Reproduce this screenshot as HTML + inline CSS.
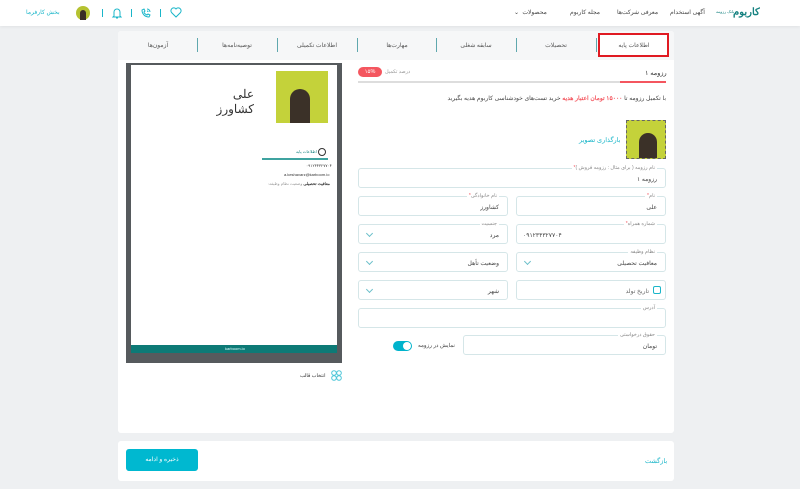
<!DOCTYPE html>
<html><head><meta charset="utf-8">
<style>
*{margin:0;padding:0;box-sizing:border-box}
body{width:800px;height:489px;background:#eef0f2;font-family:"Liberation Sans","Noto Sans CJK SC",sans-serif;position:relative;overflow:hidden;color:#333}
.a{position:absolute}
.t{font-size:6px;white-space:nowrap;direction:rtl}
.hdr{left:0;top:0;width:800px;height:26px;background:#fff;box-shadow:0 1px 3px rgba(0,0,0,.06)}
.card{background:#fff;border-radius:3px}
.fld{border:1px solid #d5e6e8;border-radius:3px;background:#fff}
.lbl{position:absolute;top:-4px;right:8px;background:#fff;padding:0 2px;font-size:5px;color:#888;direction:rtl;white-space:nowrap}
.val{position:absolute;right:8px;top:7px;font-size:6px;color:#444;direction:rtl;white-space:nowrap}
.chev{position:absolute;left:8px;top:6px;width:5px;height:5px;border-right:1px solid #6bbfca;border-bottom:1px solid #6bbfca;transform:rotate(45deg)}
.sep{width:1px;height:14px;background:#5fa8ae;top:38px}
.tab{top:42px;font-size:6px;color:#555;text-align:center;width:80px;direction:rtl}
.req{color:#f4565f}
</style></head><body>
<div class="a hdr"></div>
<div class="a" style="left:733px;top:7px;font-size:10px;font-weight:bold;color:#13807f">کاربوم</div>
<div class="a t" style="left:716px;top:9px;font-size:4px;color:#13807f">بانک رزومه</div>
<div class="a t" style="left:670px;top:9px;color:#444">آگهی استخدام</div>
<div class="a t" style="left:617px;top:9px;color:#444">معرفی شرکت‌ها</div>
<div class="a t" style="left:570px;top:9px;color:#444">مجله کاربوم</div>
<div class="a t" style="left:514px;top:9px;color:#444">محصولات &nbsp;⌄</div>
<div class="a t" style="left:26px;top:9px;color:#1ab6c9">بخش کارفرما</div>
<div class="a" style="left:76px;top:6px;width:14px;height:14px;border-radius:50%;background:#b5c230"><div style="margin:4px 0 0 4px;width:6px;height:10px;border-radius:3px 3px 0 0;background:#3a2e25"></div></div>
<div class="a" style="left:102px;top:9px;width:1px;height:8px;background:#1ab6c9"></div>
<svg class="a" style="left:112px;top:7px" width="10" height="12" viewBox="0 0 10 12"><path d="M2 9V5a3 3 0 0 1 6 0v4l1 1H1z M4 11h2" fill="none" stroke="#1ab6c9" stroke-width="1"/></svg>
<div class="a" style="left:131px;top:9px;width:1px;height:8px;background:#1ab6c9"></div>
<svg class="a" style="left:140px;top:7px" width="12" height="12" viewBox="0 0 12 12"><path d="M2 3c0 4 3 7 7 7l1-2-2-1-1 1C5 7 4 6 4 5l1-1-1-2z M7 2a3 3 0 0 1 3 3 M7 4a1 1 0 0 1 1 1" fill="none" stroke="#1ab6c9" stroke-width="1"/></svg>
<div class="a" style="left:160px;top:9px;width:1px;height:8px;background:#1ab6c9"></div>
<svg class="a" style="left:170px;top:7px" width="12" height="11" viewBox="0 0 12 11"><path d="M6 10L1.5 5.5A2.6 2.6 0 0 1 6 2a2.6 2.6 0 0 1 4.5 3.5z" fill="none" stroke="#1ab6c9" stroke-width="1"/></svg>

<div class="a card" style="left:118px;top:31px;width:556px;height:402px"></div>
<div class="a" style="left:118px;top:31px;width:556px;height:29px;background:#f6f7f8;border-radius:3px 3px 0 0"></div>
<div class="a" style="left:598px;top:33px;width:71px;height:24px;background:#fff;border:2px solid #e01a22"></div>
<div class="a tab" style="left:594px">اطلاعات پایه</div>
<div class="a sep" style="left:596px"></div>
<div class="a tab" style="left:516px">تحصیلات</div>
<div class="a sep" style="left:516px"></div>
<div class="a tab" style="left:436px">سابقه شغلی</div>
<div class="a sep" style="left:436px"></div>
<div class="a tab" style="left:357px">مهارت‌ها</div>
<div class="a sep" style="left:357px"></div>
<div class="a tab" style="left:277px">اطلاعات تکمیلی</div>
<div class="a sep" style="left:277px"></div>
<div class="a tab" style="left:197px">توصیه‌نامه‌ها</div>
<div class="a sep" style="left:197px"></div>
<div class="a tab" style="left:118px">آزمون‌ها</div>

<!-- preview -->
<div class="a" style="left:126px;top:63px;width:216px;height:300px;background:#565a5d"></div>
<div class="a" style="left:131px;top:65px;width:206px;height:281px;background:#fff"></div>
<div class="a" style="left:131px;top:345px;width:206px;height:8px;background:#0d7a76"></div>
<div class="a" style="left:225px;top:346px;font-size:4px;color:#dff">karboom.io</div>
<div class="a" style="left:276px;top:71px;width:52px;height:52px;background:#c4d23a;overflow:hidden"><div style="margin:18px 0 0 14px;width:20px;height:40px;border-radius:10px 10px 0 0;background:#3b3128"></div></div>
<div class="a" style="left:222px;top:87px;font-size:12px;color:#333;direction:rtl;width:32px;text-align:right;line-height:15px">علی<br>کشاورز</div>
<div class="a" style="left:318px;top:148px;width:8px;height:8px;border-radius:50%;border:1px solid #333"></div>
<div class="a t" style="left:296px;top:149px;font-size:4px;color:#13807f">اطلاعات پایه</div>
<div class="a" style="left:262px;top:158px;width:66px;height:2px;background:#3fa3a0"></div>
<div class="a t" style="left:306px;top:163px;font-size:4px">۰۹۱۲۳۴۳۲۷۷۰۴</div>
<div class="a t" style="left:284px;top:172px;font-size:4px">a.keshavarz@karboom.io</div>
<div class="a t" style="left:268px;top:181px;font-size:4px;color:#999"><b style="color:#333">معافیت تحصیلی</b> وضعیت نظام وظیفه:</div>
<svg class="a" style="left:331px;top:370px" width="11" height="11" viewBox="0 0 11 11"><g fill="none" stroke="#4cc6d8"><circle cx="3" cy="3" r="2.3"/><circle cx="8" cy="3" r="2.3"/><circle cx="3" cy="8" r="2.3"/><circle cx="8" cy="8" r="2.3"/></g></svg>
<div class="a t" style="left:300px;top:373px;font-size:5px">انتخاب قالب</div>

<!-- form -->
<div class="a t" style="left:645px;top:69px;font-size:6.5px;color:#333">رزومه ۱</div>
<div class="a t" style="left:385px;top:69px;font-size:5px;color:#999">درصد تکمیل</div>
<div class="a" style="left:358px;top:67px;width:24px;height:10px;border-radius:5px;background:#f4565f;color:#fff;font-size:5.5px;text-align:center;line-height:10px">۱۵%</div>
<div class="a" style="left:358px;top:81px;width:308px;height:2px;background:#ddd"></div>
<div class="a" style="left:620px;top:81px;width:46px;height:2px;background:#f4565f"></div>
<div class="a t" style="right:134px;top:95px;font-size:6px;color:#444">با تکمیل رزومه تا <b style="color:#f4565f">۱۵۰۰۰ تومان اعتبار هدیه</b> خرید تست‌های خودشناسی کاربوم هدیه بگیرید</div>
<div class="a" style="left:626px;top:120px;width:40px;height:39px;background:#c4d23a;border:1px dashed #666;overflow:hidden"><div style="margin:12px 0 0 12px;width:18px;height:30px;border-radius:9px 9px 0 0;background:#3b3128"></div></div>
<div class="a t" style="left:579px;top:136px;font-size:6.5px;color:#1ab6c9">بارگذاری تصویر</div>

<div class="a fld" style="left:358px;top:168px;width:308px;height:20px"><span class="lbl">نام رزومه ( برای مثال : رزومه فروش )<span class="req">*</span></span><span class="val">رزومه ۱</span></div>
<div class="a fld" style="left:516px;top:196px;width:150px;height:20px"><span class="lbl">نام<span class="req">*</span></span><span class="val">علی</span></div>
<div class="a fld" style="left:358px;top:196px;width:150px;height:20px"><span class="lbl">نام خانوادگی<span class="req">*</span></span><span class="val">کشاورز</span></div>
<div class="a fld" style="left:516px;top:224px;width:150px;height:20px"><span class="lbl">شماره همراه<span class="req">*</span></span><span class="val" style="right:auto;left:6px">۰۹۱۲۳۴۳۲۷۷۰۴</span></div>
<div class="a fld" style="left:358px;top:224px;width:150px;height:20px"><span class="lbl">جنسیت</span><span class="val">مرد</span><span class="chev"></span></div>
<div class="a fld" style="left:516px;top:252px;width:150px;height:20px"><span class="lbl">نظام وظیفه</span><span class="val">معافیت تحصیلی</span><span class="chev"></span></div>
<div class="a fld" style="left:358px;top:252px;width:150px;height:20px"><span class="val">وضعیت تأهل</span><span class="chev"></span></div>
<div class="a fld" style="left:516px;top:280px;width:150px;height:20px"><span class="val" style="right:16px;color:#666">تاریخ تولد</span><span style="position:absolute;right:4px;top:5px;width:8px;height:8px;border:1px solid #1ab6c9;border-radius:2px"></span></div>
<div class="a fld" style="left:358px;top:280px;width:150px;height:20px"><span class="val">شهر</span><span class="chev"></span></div>
<div class="a fld" style="left:358px;top:308px;width:308px;height:20px"><span class="lbl">آدرس</span></div>
<div class="a fld" style="left:463px;top:335px;width:203px;height:20px"><span class="lbl">حقوق درخواستی</span><span class="val">تومان</span></div>
<div class="a t" style="left:418px;top:343px;font-size:5.5px;color:#444">نمایش در رزومه</div>
<div class="a" style="left:393px;top:341px;width:19px;height:10px;border-radius:5px;background:#00b3cc"><div style="margin:1px 0 0 10px;width:8px;height:8px;border-radius:50%;background:#fff"></div></div>

<!-- bottom -->
<div class="a card" style="left:118px;top:441px;width:556px;height:40px"></div>
<div class="a" style="left:126px;top:449px;width:72px;height:22px;border-radius:3px;background:#00b8d0;color:#fff;font-size:6px;text-align:center;line-height:22px;direction:rtl">ذخیره و ادامه</div>
<div class="a t" style="left:645px;top:457px;font-size:6.5px;color:#1ab6c9">بازگشت</div>
</body></html>
